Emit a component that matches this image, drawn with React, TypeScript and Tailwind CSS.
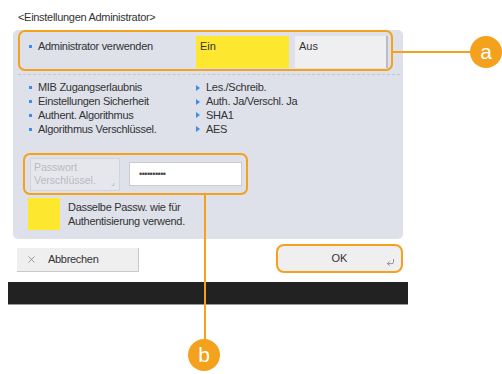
import { CornerDownLeft, X } from 'lucide-react'

interface InfoRow {
  label: string
  value: string
}

const infoRows: InfoRow[] = [
  { label: 'MIB Zugangserlaubnis', value: 'Les./Schreib.' },
  { label: 'Einstellungen Sicherheit', value: 'Auth. Ja/Verschl. Ja' },
  { label: 'Authent. Algorithmus', value: 'SHA1' },
  { label: 'Algorithmus Verschlüssel.', value: 'AES' },
]

function Bullet() {
  return <span className="mr-[6px] inline-block h-[3px] w-[3px] shrink-0 bg-[#3a8ee6]" />
}

function Arrow() {
  return (
    <span className="mr-[6px] inline-block h-0 w-0 shrink-0 border-y-[3px] border-l-[4px] border-y-transparent border-l-[#3a8ee6]" />
  )
}

function Callout({ letter }: { letter: string }) {
  return (
    <div className="flex h-[32px] w-[32px] items-center justify-center rounded-full bg-[#f4a11d] text-[21px] leading-none text-white">
      <span className="-mt-[2px]">{letter}</span>
    </div>
  )
}

export default function App() {
  return (
    <div className="relative h-[374px] w-[502px] bg-white font-['Liberation_Sans',sans-serif] text-[11px] text-[#333]">
      <div className="pl-[18px] pt-[10px] leading-[14px] tracking-[-0.3px]">&lt;Einstellungen Administrator&gt;</div>

      <div className="ml-[13px] mt-[6px] w-[390px] rounded-[5px] bg-[#dee1ea] pb-[9px] pl-[5px]">
        <div className="flex w-[375px] items-start justify-between rounded-[7px] border-2 border-[#f4a11d] pb-[1px] pl-[9px] pr-[3px] pt-[4px]">
          <div className="flex items-center pt-[4px] leading-[13px] tracking-[-0.3px]">
            <Bullet />
            Administrator verwenden
          </div>
          <div className="flex gap-[6px]">
            <div className="h-[32px] w-[93px] bg-[#fde82f] pl-[4px] pt-[4px] leading-[13px]">Ein</div>
            <div className="h-[32px] w-[93px] border-r-2 border-[#b9bcc4] bg-[#efeff1] pl-[4px] pt-[4px] leading-[13px]">Aus</div>
          </div>
        </div>

        <div className="mt-[3px] mr-[3px] border-t border-dashed border-[#c4c7d0]" />

        <div className="mt-[6px] pl-[11px]">
          {infoRows.map((row) => (
            <div key={row.label} className="flex h-[13.8px] items-center leading-[13px] tracking-[-0.3px]">
              <div className="flex w-[167px] items-center">
                <Bullet />
                {row.label}
              </div>
              <div className="flex items-center">
                <Arrow />
                {row.value}
              </div>
            </div>
          ))}
        </div>

        <div className="ml-[5px] mt-[17px] flex h-[42px] w-[225px] items-center rounded-[7px] border-2 border-[#f4a11d] pl-[5px]">
          <div className="relative h-[33px] w-[90px] border border-[#d2d4da] bg-[#e6e7ec] pl-[3px] pt-[2px] text-[10.5px] leading-[13px] text-[#b8bac0]">
            Passwort
            <br />
            Verschlüssel.
            <span className="absolute bottom-[3px] right-[4px] text-[8px] leading-none text-[#aaa]">⌟</span>
          </div>
          <div className="ml-[9px] flex h-[24px] w-[113px] items-center border border-[#c9cbd1] bg-white pl-[9px] text-[9px] leading-none tracking-[-0.5px] text-[#444]">
            ••••••••••
          </div>
        </div>

        <div className="ml-[10px] mt-[3px] flex items-center">
          <div className="h-[32px] w-[32px] bg-[#fde82f]" />
          <div className="ml-[8px] leading-[14px] tracking-[-0.3px]">
            Dasselbe Passw. wie für
            <br />
            Authentisierung verwend.
          </div>
        </div>
      </div>

      <div className="ml-[17px] mt-[5px] flex w-[386px] items-end justify-between">
        <div className="mb-[1px] flex h-[24px] w-[122px] items-center border-b border-r border-[#c9c9c9] bg-[#efefef] pl-[9px] leading-none tracking-[-0.3px]">
          <X size={11} strokeWidth={1.5} className="text-[#777]" />
          <span className="ml-[11px]">Abbrechen</span>
        </div>
        <div className="relative flex h-[29px] w-[127px] items-center justify-center rounded-[8px] border-2 border-[#f4a11d] bg-[#efefef] leading-none">
          OK
          <CornerDownLeft size={9} strokeWidth={2} className="absolute bottom-[4px] right-[6px] text-[#777]" />
        </div>
      </div>

      <div className="ml-[8px] mt-[9px] h-[23px] w-[400px] border-b border-[#999] bg-[#222]" />

      <div className="absolute left-[393px] top-[51px] h-[2px] w-[80px] bg-[#f4a11d]" />
      <div className="absolute left-[470px] top-[36px]">
        <Callout letter="a" />
      </div>
      <div className="absolute left-[204px] top-[195px] h-[148px] w-[2px] bg-[#f4a11d]" />
      <div className="absolute left-[188px] top-[339px]">
        <Callout letter="b" />
      </div>
    </div>
  )
}
